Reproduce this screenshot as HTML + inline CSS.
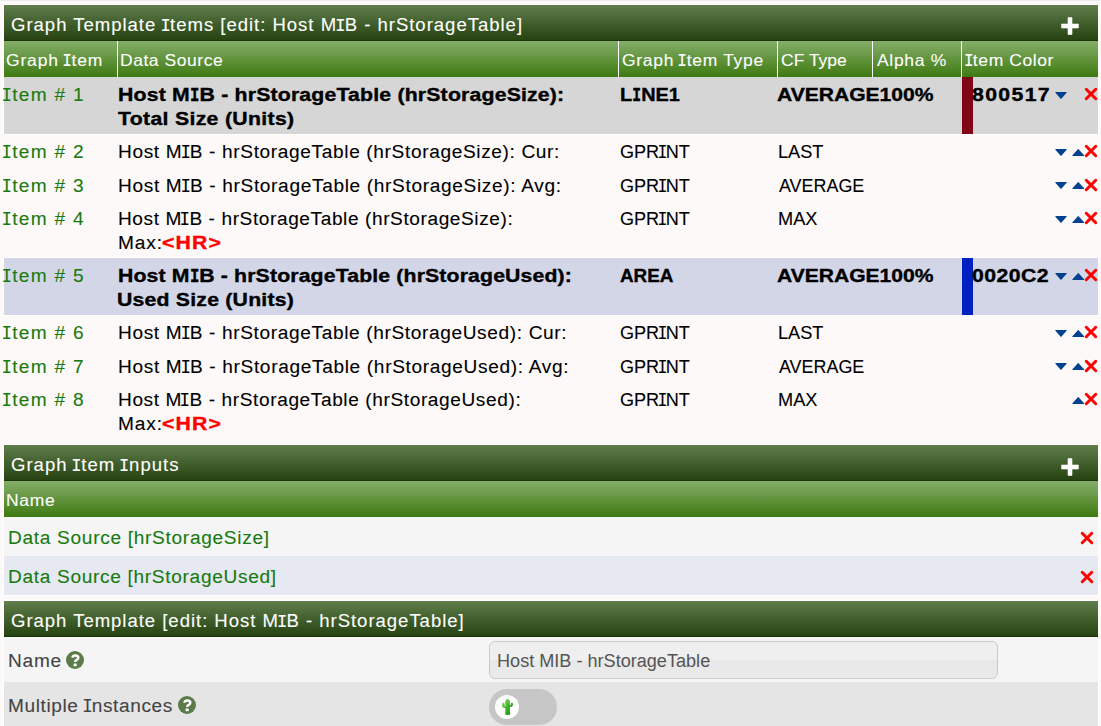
<!DOCTYPE html><html><head><meta charset="utf-8"><style>.I{display:inline-flex;justify-content:center;font-family:'Liberation Mono';font-weight:400;font-size:1.083em;width:.333em;transform:scaleX(.85);margin-right:var(--ls,0)}.B .I{font-weight:700;width:.415em;transform:scaleX(.68)}
*{margin:0;padding:0;box-sizing:border-box}
html,body{width:1101px;height:726px;overflow:hidden;background:#fdf9f8;font-family:"Liberation Sans",sans-serif}
.a{position:absolute}
.t{position:absolute;transform-origin:0 0;white-space:nowrap;font-size:18px;line-height:24px;-webkit-text-stroke:0.1px currentColor}
.title{position:absolute;left:4px;width:1094px;height:36px;background:linear-gradient(#5f7e4c,#24410f);box-shadow:0 -1px 0 #fff,inset 0 -1px 0 #1b340b}
.hdr{position:absolute;left:4px;width:1094px;height:36px;background:linear-gradient(#84ae69,#3e7a11)}
.vl{position:absolute;width:1px;background:#fff}
.B{-webkit-text-stroke:0.35px currentColor}
</style></head><body><div class="a" style="left:0;top:0;width:1101px;height:1px;background:#ececec"></div><div class="a" style="left:3px;top:4px;width:1096px;height:131px;background:#fff"></div><div class="a" style="left:3px;top:257px;width:1096px;height:59px;background:#fff"></div><div class="a" style="left:3px;top:444px;width:1096px;height:152px;background:#fff"></div><div class="a" style="left:3px;top:600px;width:1096px;height:126px;background:#fff"></div><div class="title" style="top:5px"></div><div class="hdr" style="top:41px"></div><div class="vl" style="left:117px;top:41px;height:36px"></div><div class="vl" style="left:618px;top:41px;height:36px"></div><div class="vl" style="left:777px;top:41px;height:36px"></div><div class="vl" style="left:872px;top:41px;height:36px"></div><div class="vl" style="left:961px;top:41px;height:36px"></div><div class="a" style="left:4px;top:77px;width:1094px;height:57px;background:#d6d6d6"></div><div class="a" style="left:4px;top:258px;width:1094px;height:57px;background:#d3d6e7"></div><div class="a" style="left:962px;top:77px;width:11px;height:57px;background:#800517"></div><div class="a" style="left:962px;top:258px;width:11px;height:57px;background:#0020c2"></div><div class="title" style="top:445px"></div><div class="hdr" style="top:481px"></div><div class="a" style="left:4px;top:517px;width:1094px;height:38.5px;background:#f5f5f5"></div><div class="a" style="left:4px;top:555.5px;width:1094px;height:39.5px;background:#e6e8f2"></div><div class="title" style="top:601px"></div><div class="a" style="left:4px;top:637px;width:1094px;height:45px;background:#f5f5f5"></div><div class="a" style="left:4px;top:682px;width:1094px;height:44px;background:#e5e5e5"></div><svg class="a" style="left:1054.90px;top:91.90px" width="12" height="8" viewBox="0 0 12 8"><path d="M0.8 0 L11.2 0 Q12 0.2 11.6 0.8 L6.3 6.8 Q6 7.1 5.7 6.8 L0.4 0.8 Q0 0.2 0.8 0Z" fill="#00428f"/></svg><svg class="a" style="left:1083.40px;top:86.05px" width="16" height="16" viewBox="-8 -8 16 16"><path d="M-4.75 -4.75 L4.75 4.75 M4.75 -4.75 L-4.75 4.75" stroke="#ff0000" stroke-width="3.00" stroke-linecap="round"/></svg><svg class="a" style="left:1054.90px;top:148.90px" width="12" height="8" viewBox="0 0 12 8"><path d="M0.8 0 L11.2 0 Q12 0.2 11.6 0.8 L6.3 6.8 Q6 7.1 5.7 6.8 L0.4 0.8 Q0 0.2 0.8 0Z" fill="#00428f"/></svg><svg class="a" style="left:1072.30px;top:148.70px" width="13" height="8" viewBox="0 0 13 8"><path d="M0.8 7 L11.7 7 Q12.5 6.8 12.1 6.2 L6.55 0.2 Q6.25 -0.1 5.95 0.2 L0.4 6.2 Q0 6.8 0.8 7Z" fill="#00428f"/></svg><svg class="a" style="left:1083.40px;top:143.05px" width="16" height="16" viewBox="-8 -8 16 16"><path d="M-4.75 -4.75 L4.75 4.75 M4.75 -4.75 L-4.75 4.75" stroke="#ff0000" stroke-width="3.00" stroke-linecap="round"/></svg><svg class="a" style="left:1054.90px;top:182.40px" width="12" height="8" viewBox="0 0 12 8"><path d="M0.8 0 L11.2 0 Q12 0.2 11.6 0.8 L6.3 6.8 Q6 7.1 5.7 6.8 L0.4 0.8 Q0 0.2 0.8 0Z" fill="#00428f"/></svg><svg class="a" style="left:1072.30px;top:182.20px" width="13" height="8" viewBox="0 0 13 8"><path d="M0.8 7 L11.7 7 Q12.5 6.8 12.1 6.2 L6.55 0.2 Q6.25 -0.1 5.95 0.2 L0.4 6.2 Q0 6.8 0.8 7Z" fill="#00428f"/></svg><svg class="a" style="left:1083.40px;top:176.55px" width="16" height="16" viewBox="-8 -8 16 16"><path d="M-4.75 -4.75 L4.75 4.75 M4.75 -4.75 L-4.75 4.75" stroke="#ff0000" stroke-width="3.00" stroke-linecap="round"/></svg><svg class="a" style="left:1054.90px;top:215.90px" width="12" height="8" viewBox="0 0 12 8"><path d="M0.8 0 L11.2 0 Q12 0.2 11.6 0.8 L6.3 6.8 Q6 7.1 5.7 6.8 L0.4 0.8 Q0 0.2 0.8 0Z" fill="#00428f"/></svg><svg class="a" style="left:1072.30px;top:215.70px" width="13" height="8" viewBox="0 0 13 8"><path d="M0.8 7 L11.7 7 Q12.5 6.8 12.1 6.2 L6.55 0.2 Q6.25 -0.1 5.95 0.2 L0.4 6.2 Q0 6.8 0.8 7Z" fill="#00428f"/></svg><svg class="a" style="left:1083.40px;top:210.05px" width="16" height="16" viewBox="-8 -8 16 16"><path d="M-4.75 -4.75 L4.75 4.75 M4.75 -4.75 L-4.75 4.75" stroke="#ff0000" stroke-width="3.00" stroke-linecap="round"/></svg><svg class="a" style="left:1054.90px;top:272.90px" width="12" height="8" viewBox="0 0 12 8"><path d="M0.8 0 L11.2 0 Q12 0.2 11.6 0.8 L6.3 6.8 Q6 7.1 5.7 6.8 L0.4 0.8 Q0 0.2 0.8 0Z" fill="#00428f"/></svg><svg class="a" style="left:1072.30px;top:272.70px" width="13" height="8" viewBox="0 0 13 8"><path d="M0.8 7 L11.7 7 Q12.5 6.8 12.1 6.2 L6.55 0.2 Q6.25 -0.1 5.95 0.2 L0.4 6.2 Q0 6.8 0.8 7Z" fill="#00428f"/></svg><svg class="a" style="left:1083.40px;top:267.05px" width="16" height="16" viewBox="-8 -8 16 16"><path d="M-4.75 -4.75 L4.75 4.75 M4.75 -4.75 L-4.75 4.75" stroke="#ff0000" stroke-width="3.00" stroke-linecap="round"/></svg><svg class="a" style="left:1054.90px;top:329.90px" width="12" height="8" viewBox="0 0 12 8"><path d="M0.8 0 L11.2 0 Q12 0.2 11.6 0.8 L6.3 6.8 Q6 7.1 5.7 6.8 L0.4 0.8 Q0 0.2 0.8 0Z" fill="#00428f"/></svg><svg class="a" style="left:1072.30px;top:329.70px" width="13" height="8" viewBox="0 0 13 8"><path d="M0.8 7 L11.7 7 Q12.5 6.8 12.1 6.2 L6.55 0.2 Q6.25 -0.1 5.95 0.2 L0.4 6.2 Q0 6.8 0.8 7Z" fill="#00428f"/></svg><svg class="a" style="left:1083.40px;top:324.05px" width="16" height="16" viewBox="-8 -8 16 16"><path d="M-4.75 -4.75 L4.75 4.75 M4.75 -4.75 L-4.75 4.75" stroke="#ff0000" stroke-width="3.00" stroke-linecap="round"/></svg><svg class="a" style="left:1054.90px;top:363.40px" width="12" height="8" viewBox="0 0 12 8"><path d="M0.8 0 L11.2 0 Q12 0.2 11.6 0.8 L6.3 6.8 Q6 7.1 5.7 6.8 L0.4 0.8 Q0 0.2 0.8 0Z" fill="#00428f"/></svg><svg class="a" style="left:1072.30px;top:363.20px" width="13" height="8" viewBox="0 0 13 8"><path d="M0.8 7 L11.7 7 Q12.5 6.8 12.1 6.2 L6.55 0.2 Q6.25 -0.1 5.95 0.2 L0.4 6.2 Q0 6.8 0.8 7Z" fill="#00428f"/></svg><svg class="a" style="left:1083.40px;top:357.55px" width="16" height="16" viewBox="-8 -8 16 16"><path d="M-4.75 -4.75 L4.75 4.75 M4.75 -4.75 L-4.75 4.75" stroke="#ff0000" stroke-width="3.00" stroke-linecap="round"/></svg><svg class="a" style="left:1072.30px;top:396.70px" width="13" height="8" viewBox="0 0 13 8"><path d="M0.8 7 L11.7 7 Q12.5 6.8 12.1 6.2 L6.55 0.2 Q6.25 -0.1 5.95 0.2 L0.4 6.2 Q0 6.8 0.8 7Z" fill="#00428f"/></svg><svg class="a" style="left:1083.40px;top:391.05px" width="16" height="16" viewBox="-8 -8 16 16"><path d="M-4.75 -4.75 L4.75 4.75 M4.75 -4.75 L-4.75 4.75" stroke="#ff0000" stroke-width="3.00" stroke-linecap="round"/></svg><svg class="a" style="left:1079.00px;top:529.95px" width="16" height="16" viewBox="-8 -8 16 16"><path d="M-4.75 -4.75 L4.75 4.75 M4.75 -4.75 L-4.75 4.75" stroke="#ff0000" stroke-width="3.00" stroke-linecap="round"/></svg><svg class="a" style="left:1079.00px;top:569.10px" width="16" height="16" viewBox="-8 -8 16 16"><path d="M-4.75 -4.75 L4.75 4.75 M4.75 -4.75 L-4.75 4.75" stroke="#ff0000" stroke-width="3.00" stroke-linecap="round"/></svg><svg class="a" style="left:1061.00px;top:16.70px" width="18" height="18" viewBox="0 0 18 18"><path d="M7 0.6h4v6.4h6.4v4h-6.4v6.4h-4v-6.4h-6.4v-4h6.4z" fill="#fff" stroke="#fff" stroke-width="0.6" stroke-linejoin="round"/></svg><svg class="a" style="left:1061.00px;top:457.80px" width="18" height="18" viewBox="0 0 18 18"><path d="M7 0.6h4v6.4h6.4v4h-6.4v6.4h-4v-6.4h-6.4v-4h6.4z" fill="#fff" stroke="#fff" stroke-width="0.6" stroke-linejoin="round"/></svg><svg class="a" style="left:66.00px;top:651.10px" width="18" height="18" viewBox="0 0 17.8 17.8"><circle cx="8.9" cy="8.9" r="8.9" fill="#5b7b4a"/><path d="M6.4 6.6 C6.4 5 7.6 4.4 9.2 4.4 C11 4.4 12.2 5.3 12.2 6.7 C12.2 8.2 10.6 8.6 9.9 9.2 C9.2 9.7 9.1 10.2 9.1 10.9" fill="none" stroke="#fff" stroke-width="2.4"/><rect x="7.5" y="12.4" width="3.1" height="2.6" rx="0.5" fill="#fff"/></svg><svg class="a" style="left:177.70px;top:696.40px" width="18" height="18" viewBox="0 0 17.8 17.8"><circle cx="8.9" cy="8.9" r="8.9" fill="#5b7b4a"/><path d="M6.4 6.6 C6.4 5 7.6 4.4 9.2 4.4 C11 4.4 12.2 5.3 12.2 6.7 C12.2 8.2 10.6 8.6 9.9 9.2 C9.2 9.7 9.1 10.2 9.1 10.9" fill="none" stroke="#fff" stroke-width="2.4"/><rect x="7.5" y="12.4" width="3.1" height="2.6" rx="0.5" fill="#fff"/></svg><div class="a" style="left:489px;top:641px;width:509px;height:38px;border:1px solid #cacaca;border-radius:6px;background:linear-gradient(#efefef 0,#efefef 50%,#e8e8e8 50%,#ebebeb 100%)"></div><div class="a" style="left:489px;top:689px;width:68px;height:36px;border-radius:18px;background:#c6c6c6"></div><div class="a" style="left:494.7px;top:694.7px;width:24.2px;height:24.2px;border-radius:50%;background:#fff"></div><svg class="a" style="left:497px;top:695px" width="20" height="24" viewBox="0 0 20 24"><defs><linearGradient id="cg" x1="0" y1="0" x2="1" y2="1"><stop offset="0" stop-color="#9be06a"/><stop offset="0.55" stop-color="#3cab2a"/><stop offset="1" stop-color="#138a0c"/></linearGradient></defs><path d="M8.2 19.8 L8.4 17 L8.2 6.4 Q8.3 4.1 10.5 4.1 Q12.9 4.3 12.9 6.8 L12.9 17.5 L13.5 19.2 Q12.6 19.9 10.6 19.9 Z M8.3 13.3 Q5 13.2 5 10.3 L5 9.2 Q5.1 7.8 6.5 7.8 Q7.7 7.9 7.7 9.2 L7.7 11.4 L8.3 11.6 Z M12.9 12.3 Q15.9 11.8 16 9.4 L16 8.8 Q15.8 7.7 14.7 7.8 Q13.6 8 13.6 9.2 L13.6 10.2 L12.9 10.4 Z" fill="url(#cg)"/></svg><div class="t" style="--ls:0.919px;left:10.64px;top:13.00px;color:#fdfdfd;font-weight:400;letter-spacing:0.919px;transform:scaleX(1.0600);font-size:17.5px">Graph Template <span class="I">I</span>tems [edit: Host M<span class="I">I</span>B - hrStorageTable]</div><div class="t" style="--ls:0.784px;left:5.94px;top:48.00px;color:#fdfdfd;font-weight:400;letter-spacing:0.784px;transform:scaleX(1.0600);font-size:16.5px">Graph <span class="I">I</span>tem</div><div class="t" style="--ls:0.519px;left:120.34px;top:48.00px;color:#fdfdfd;font-weight:400;letter-spacing:0.519px;transform:scaleX(1.0600);font-size:16.5px">Data Source</div><div class="t" style="--ls:0.659px;left:622.34px;top:48.00px;color:#fdfdfd;font-weight:400;letter-spacing:0.659px;transform:scaleX(1.0600);font-size:16.5px">Graph <span class="I">I</span>tem Type</div><div class="t" style="--ls:0.006px;left:780.64px;top:48.00px;color:#fdfdfd;font-weight:400;letter-spacing:0.006px;transform:scaleX(1.0600);font-size:16.5px">CF Type</div><div class="t" style="--ls:0.635px;left:876.70px;top:48.00px;color:#fdfdfd;font-weight:400;letter-spacing:0.635px;transform:scaleX(1.0600);font-size:16.5px">Alpha %</div><div class="t" style="--ls:0.553px;left:965.90px;top:48.00px;color:#fdfdfd;font-weight:400;letter-spacing:0.553px;transform:scaleX(1.0600);font-size:16.5px"><span class="I">I</span>tem Color</div><div class="t" style="--ls:1.245px;left:4.40px;top:83.00px;color:#187a0f;font-weight:400;letter-spacing:1.245px;transform:scaleX(1.0600);font-size:18px"><span class="I">I</span>tem # 1</div><div class="t B" style="--ls:0.155px;left:117.72px;top:83.00px;color:#000;font-weight:700;letter-spacing:0.155px;transform:scaleX(1.1800);font-size:18px">Host M<span class="I">I</span>B - hrStorageTable (hrStorageSize):</div><div class="t B" style="--ls:0.268px;left:118.20px;top:107.00px;color:#000;font-weight:700;letter-spacing:0.268px;transform:scaleX(1.1800);font-size:18px">Total Size (Units)</div><div class="t B" style="--ls:0.000px;left:619.69px;top:83.00px;color:#000;font-weight:700;letter-spacing:0.000px;transform:scaleX(1.1075);font-size:18px">L<span class="I">I</span>NE1</div><div class="t B" style="--ls:0.000px;left:777.13px;top:83.00px;color:#000;font-weight:700;letter-spacing:0.000px;transform:scaleX(1.1697);font-size:18px">AVERAGE100%</div><div class="t B" style="--ls:1.146px;left:971.92px;top:83.00px;color:#000;font-weight:700;letter-spacing:1.146px;transform:scaleX(1.1800);font-size:18px">800517</div><div class="t" style="--ls:1.245px;left:4.40px;top:140.00px;color:#187a0f;font-weight:400;letter-spacing:1.245px;transform:scaleX(1.0600);font-size:18px"><span class="I">I</span>tem # 2</div><div class="t" style="--ls:0.604px;left:117.94px;top:140.00px;color:#000;font-weight:400;letter-spacing:0.604px;transform:scaleX(1.0600);font-size:18px">Host M<span class="I">I</span>B - hrStorageTable (hrStorageSize): Cur:</div><div class="t" style="--ls:0.000px;left:619.50px;top:140.00px;color:#000;font-weight:400;letter-spacing:0.000px;transform:scaleX(1.0044);font-size:18px">GPR<span class="I">I</span>NT</div><div class="t" style="--ls:0.000px;left:777.59px;top:140.00px;color:#000;font-weight:400;letter-spacing:0.000px;transform:scaleX(1.0091);font-size:18px">LAST</div><div class="t" style="--ls:1.245px;left:4.40px;top:173.50px;color:#187a0f;font-weight:400;letter-spacing:1.245px;transform:scaleX(1.0600);font-size:18px"><span class="I">I</span>tem # 3</div><div class="t" style="--ls:0.621px;left:117.94px;top:173.50px;color:#000;font-weight:400;letter-spacing:0.621px;transform:scaleX(1.0600);font-size:18px">Host M<span class="I">I</span>B - hrStorageTable (hrStorageSize): Avg:</div><div class="t" style="--ls:0.000px;left:619.50px;top:173.50px;color:#000;font-weight:400;letter-spacing:0.000px;transform:scaleX(1.0044);font-size:18px">GPR<span class="I">I</span>NT</div><div class="t" style="--ls:0.000px;left:778.60px;top:173.50px;color:#000;font-weight:400;letter-spacing:0.000px;transform:scaleX(0.9953);font-size:18px">AVERAGE</div><div class="t" style="--ls:1.245px;left:4.40px;top:207.00px;color:#187a0f;font-weight:400;letter-spacing:1.245px;transform:scaleX(1.0600);font-size:18px"><span class="I">I</span>tem # 4</div><div class="t" style="--ls:0.556px;left:117.94px;top:207.00px;color:#000;font-weight:400;letter-spacing:0.556px;transform:scaleX(1.0600);font-size:18px">Host M<span class="I">I</span>B - hrStorageTable (hrStorageSize):</div><div class="t" style="--ls:0.843px;left:117.94px;top:231.00px;color:#000;font-weight:400;letter-spacing:0.843px;transform:scaleX(1.0600);font-size:18px">Max:</div><div class="t B" style="--ls:0.966px;left:162.42px;top:231.00px;color:#ff0000;font-weight:700;letter-spacing:0.966px;transform:scaleX(1.1800);font-size:18px">&lt;HR&gt;</div><div class="t" style="--ls:0.000px;left:619.50px;top:207.00px;color:#000;font-weight:400;letter-spacing:0.000px;transform:scaleX(1.0044);font-size:18px">GPR<span class="I">I</span>NT</div><div class="t" style="--ls:0.000px;left:777.59px;top:207.00px;color:#000;font-weight:400;letter-spacing:0.000px;transform:scaleX(1.0105);font-size:18px">MAX</div><div class="t" style="--ls:1.245px;left:4.40px;top:264.00px;color:#187a0f;font-weight:400;letter-spacing:1.245px;transform:scaleX(1.0600);font-size:18px"><span class="I">I</span>tem # 5</div><div class="t B" style="--ls:0.119px;left:117.72px;top:264.00px;color:#000;font-weight:700;letter-spacing:0.119px;transform:scaleX(1.1800);font-size:18px">Host M<span class="I">I</span>B - hrStorageTable (hrStorageUsed):</div><div class="t B" style="--ls:0.175px;left:117.02px;top:288.00px;color:#000;font-weight:700;letter-spacing:0.175px;transform:scaleX(1.1800);font-size:18px">Used Size (Units)</div><div class="t B" style="--ls:0.000px;left:619.75px;top:264.00px;color:#000;font-weight:700;letter-spacing:0.000px;transform:scaleX(1.0480);font-size:18px">AREA</div><div class="t B" style="--ls:0.000px;left:777.13px;top:264.00px;color:#000;font-weight:700;letter-spacing:0.000px;transform:scaleX(1.1697);font-size:18px">AVERAGE100%</div><div class="t B" style="--ls:0.346px;left:971.92px;top:264.00px;color:#000;font-weight:700;letter-spacing:0.346px;transform:scaleX(1.1800);font-size:18px">0020C2</div><div class="t" style="--ls:1.245px;left:4.40px;top:321.00px;color:#187a0f;font-weight:400;letter-spacing:1.245px;transform:scaleX(1.0600);font-size:18px"><span class="I">I</span>tem # 6</div><div class="t" style="--ls:0.599px;left:117.94px;top:321.00px;color:#000;font-weight:400;letter-spacing:0.599px;transform:scaleX(1.0600);font-size:18px">Host M<span class="I">I</span>B - hrStorageTable (hrStorageUsed): Cur:</div><div class="t" style="--ls:0.000px;left:619.50px;top:321.00px;color:#000;font-weight:400;letter-spacing:0.000px;transform:scaleX(1.0044);font-size:18px">GPR<span class="I">I</span>NT</div><div class="t" style="--ls:0.000px;left:777.59px;top:321.00px;color:#000;font-weight:400;letter-spacing:0.000px;transform:scaleX(1.0091);font-size:18px">LAST</div><div class="t" style="--ls:1.245px;left:4.40px;top:354.50px;color:#187a0f;font-weight:400;letter-spacing:1.245px;transform:scaleX(1.0600);font-size:18px"><span class="I">I</span>tem # 7</div><div class="t" style="--ls:0.623px;left:117.94px;top:354.50px;color:#000;font-weight:400;letter-spacing:0.623px;transform:scaleX(1.0600);font-size:18px">Host M<span class="I">I</span>B - hrStorageTable (hrStorageUsed): Avg:</div><div class="t" style="--ls:0.000px;left:619.50px;top:354.50px;color:#000;font-weight:400;letter-spacing:0.000px;transform:scaleX(1.0044);font-size:18px">GPR<span class="I">I</span>NT</div><div class="t" style="--ls:0.000px;left:778.60px;top:354.50px;color:#000;font-weight:400;letter-spacing:0.000px;transform:scaleX(0.9953);font-size:18px">AVERAGE</div><div class="t" style="--ls:1.245px;left:4.40px;top:388.00px;color:#187a0f;font-weight:400;letter-spacing:1.245px;transform:scaleX(1.0600);font-size:18px"><span class="I">I</span>tem # 8</div><div class="t" style="--ls:0.567px;left:117.94px;top:388.00px;color:#000;font-weight:400;letter-spacing:0.567px;transform:scaleX(1.0600);font-size:18px">Host M<span class="I">I</span>B - hrStorageTable (hrStorageUsed):</div><div class="t" style="--ls:0.843px;left:117.94px;top:412.00px;color:#000;font-weight:400;letter-spacing:0.843px;transform:scaleX(1.0600);font-size:18px">Max:</div><div class="t B" style="--ls:0.966px;left:162.42px;top:412.00px;color:#ff0000;font-weight:700;letter-spacing:0.966px;transform:scaleX(1.1800);font-size:18px">&lt;HR&gt;</div><div class="t" style="--ls:0.000px;left:619.50px;top:388.00px;color:#000;font-weight:400;letter-spacing:0.000px;transform:scaleX(1.0044);font-size:18px">GPR<span class="I">I</span>NT</div><div class="t" style="--ls:0.000px;left:777.59px;top:388.00px;color:#000;font-weight:400;letter-spacing:0.000px;transform:scaleX(1.0105);font-size:18px">MAX</div><div class="t" style="--ls:0.942px;left:10.84px;top:452.90px;color:#fdfdfd;font-weight:400;letter-spacing:0.942px;transform:scaleX(1.0600);font-size:17.5px">Graph <span class="I">I</span>tem <span class="I">I</span>nputs</div><div class="t" style="--ls:0.623px;left:6.44px;top:487.90px;color:#fdfdfd;font-weight:400;letter-spacing:0.623px;transform:scaleX(1.0600);font-size:16.5px">Name</div><div class="t" style="--ls:0.660px;left:7.94px;top:525.70px;color:#187a0f;font-weight:400;letter-spacing:0.660px;transform:scaleX(1.0600);font-size:18px">Data Source [hrStorageSize]</div><div class="t" style="--ls:0.644px;left:7.94px;top:564.90px;color:#187a0f;font-weight:400;letter-spacing:0.644px;transform:scaleX(1.0600);font-size:18px">Data Source [hrStorageUsed]</div><div class="t" style="--ls:0.909px;left:10.84px;top:608.80px;color:#fdfdfd;font-weight:400;letter-spacing:0.909px;transform:scaleX(1.0600);font-size:17.5px">Graph Template [edit: Host M<span class="I">I</span>B - hrStorageTable]</div><div class="t" style="--ls:0.704px;left:7.94px;top:648.80px;color:#444;font-weight:400;letter-spacing:0.704px;transform:scaleX(1.0600);font-size:18px">Name</div><div class="t" style="--ls:0.553px;left:7.94px;top:694.10px;color:#444;font-weight:400;letter-spacing:0.553px;transform:scaleX(1.0600);font-size:18px">Multiple <span class="I">I</span>nstances</div><div class="t" style="--ls:0.000px;left:496.89px;top:648.80px;color:#555;font-weight:400;letter-spacing:0.000px;transform:scaleX(1.0052);font-size:18px;-webkit-text-stroke:0">Host MIB - hrStorageTable</div></body></html>
